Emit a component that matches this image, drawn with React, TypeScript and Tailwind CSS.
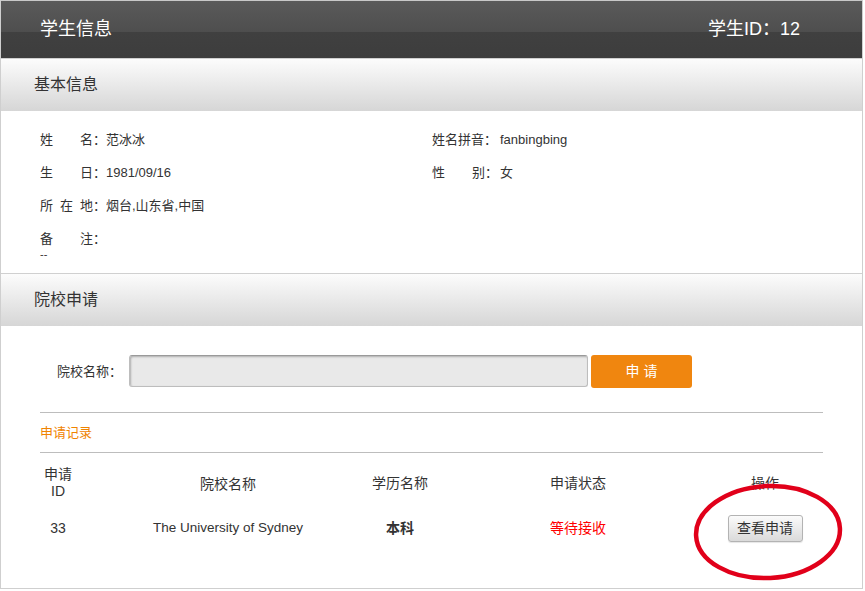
const FONT = "font-['Liberation_Sans','Noto_Sans_CJK_SC',sans-serif]";

function Label({ chars }: { chars: string[] }) {
  return (
    <span className="flex w-[66px] shrink-0">
      <span className="flex w-[53px] justify-between">
        {chars.map((c, i) => (
          <span key={i}>{c}</span>
        ))}
      </span>
      <span>：</span>
    </span>
  );
}

function SectionHeader({ title }: { title: string }) {
  return (
    <div className="flex h-[53px] items-center border-t border-[#d0d0d0] bg-[linear-gradient(to_bottom,#fcfcfc,#d6d6d6)] pl-[33px] text-[16px] text-[#333]">
      {title}
    </div>
  );
}

export default function App() {
  return (
    <div className={`${FONT} w-[863px] border-x border-b border-[#cfcfcf] bg-white text-[#333]`}>
      {/* top bar */}
      <div className="flex h-[58px] items-center justify-between border-t border-[#c8c8c8] bg-[linear-gradient(to_bottom,#5a5a5a_0%,#4e4e4e_55%,#404040_55%,#3d3d3d_100%)] pl-[39px] pr-[62px] text-[18px] text-white">
        <span>学生信息</span>
        <span>学生ID：12</span>
      </div>

      <SectionHeader title="基本信息" />
      <div className="px-[39px] pt-[12px] pb-[13px] text-[13px]">
        <div className="flex h-[33px] items-center">
          <div className="flex w-[392px]">
            <Label chars={["姓", "名"]} />
            <span>范冰冰</span>
          </div>
          <div className="flex">
            <span className="w-[68px]">姓名拼音：</span>
            <span>fanbingbing</span>
          </div>
        </div>
        <div className="flex h-[33px] items-center">
          <div className="flex w-[392px]">
            <Label chars={["生", "日"]} />
            <span>1981/09/16</span>
          </div>
          <div className="flex">
            <Label chars={["性", "别"]} />
            <span className="ml-[2px]">女</span>
          </div>
        </div>
        <div className="flex h-[33px] items-center">
          <Label chars={["所", "在", "地"]} />
          <span>烟台,山东省,中国</span>
        </div>
        <div className="flex h-[33px] items-center">
          <Label chars={["备", "注"]} />
        </div>
        <div className="-mt-[7px] h-[12px] text-[11px] leading-[12px]">--</div>
      </div>

      <SectionHeader title="院校申请" />
      <div className="px-[39px] pt-[29px]">
        <div className="flex items-start">
          <span className="ml-[17px] mt-[7px] w-[72px] text-[13px]">院校名称：</span>
          <input
            className="h-[32px] w-[459px] rounded-[3px] border border-[#bdbdbd] border-t-[#9a9a9a] bg-[#e9e9e9] shadow-[inset_1px_1px_2px_rgba(0,0,0,0.25)] outline-none"
            type="text"
          />
          <button className="ml-[3px] h-[33px] w-[101px] rounded-[3px] bg-[#f0860f] text-[14px] text-white">
            申 请
          </button>
        </div>

        <div className="mt-[24px] border-t border-[#bdbdbd]" />
        <div className="flex h-[39px] items-center text-[13px] text-[#f08300]">申请记录</div>
        <div className="border-t border-[#bdbdbd]" />

        {/* records */}
        <div className="flex h-[60px] items-center text-[14px]">
          <div className="flex w-[36px] flex-col items-center leading-[17px]">
            <span>申请</span>
            <span>ID</span>
          </div>
          <div className="ml-[52px] mt-[2px] w-[200px] text-center">院校名称</div>
          <div className="ml-[32px] w-[80px] text-center">学历名称</div>
          <div className="ml-[88px] w-[100px] text-center">申请状态</div>
          <div className="ml-[87px] w-[100px] text-center">操作</div>
        </div>
        <div className="flex h-[30px] items-center text-[14px]">
          <div className="w-[36px] text-center">33</div>
          <div className="ml-[52px] w-[200px] text-center text-[13.5px]">The University of Sydney</div>
          <div className="ml-[32px] w-[80px] text-center font-bold">本科</div>
          <div className="ml-[88px] w-[100px] text-center text-[#ff0000]">等待接收</div>
          <div className="relative ml-[87px] flex w-[100px] justify-center">
            <button className="h-[27px] w-[75px] rounded-[3px] border border-[#b3b3b3] bg-[linear-gradient(to_bottom,#fbfbfb,#dadada)] text-[14px] text-[#333] shadow-[0_1px_1px_rgba(0,0,0,0.1)]">
              查看申请
            </button>
            <svg
              className="pointer-events-none absolute left-[-24px] top-[-32px]"
              width="154"
              height="100"
              viewBox="0 0 154 100"
            >
              <ellipse
                cx="77"
                cy="49"
                rx="72"
                ry="46"
                fill="none"
                stroke="#e1001a"
                strokeWidth="4.5"
                transform="rotate(-3 77 49)"
              />
            </svg>
          </div>
        </div>
        <div className="h-[45px]" />
      </div>
    </div>
  );
}
